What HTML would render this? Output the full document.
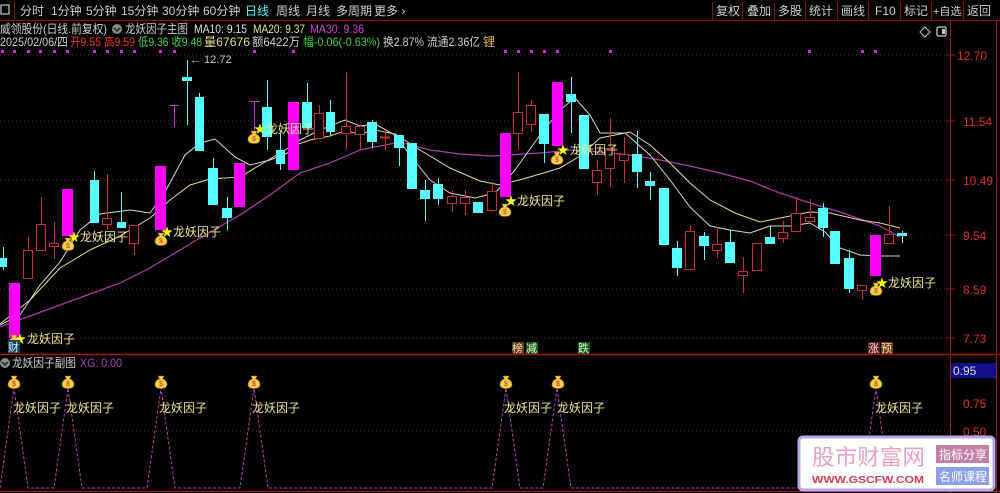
<!DOCTYPE html>
<html><head><meta charset="utf-8"><style>
body{margin:0;background:#000;width:1000px;height:493px;overflow:hidden;font-family:"Liberation Sans","Noto Sans CJK SC",sans-serif;}
svg{position:absolute;left:0;top:0}
text{font-family:"Liberation Sans","Noto Sans CJK SC",sans-serif}
</style></head><body>
<svg width="1000" height="493" viewBox="0 0 1000 493">
<rect x="0" y="0" width="1000" height="20" fill="#000"/>
<line x1="0" y1="20.5" x2="1000" y2="20.5" stroke="#8a1010"/>
<rect x="1" y="5" width="8" height="9" fill="none" stroke="#ccc" stroke-width="1.2"/>
<line x1="14.5" y1="2" x2="14.5" y2="19" stroke="#8a1010"/>
<g font-size="12" fill="#d0d0d0">
<text x="20" y="15">分时</text><text x="51" y="15">1分钟</text><text x="86" y="15">5分钟</text><text x="121" y="15">15分钟</text><text x="162" y="15">30分钟</text><text x="203" y="15">60分钟</text>
<text x="245" y="15" fill="#5ff">日线</text><text x="276" y="15">周线</text><text x="306" y="15">月线</text><text x="336" y="15">多周期</text><text x="374" y="15">更多 ›</text>
<text x="716" y="15">复权</text><text x="747" y="15">叠加</text><text x="778" y="15">多股</text><text x="809" y="15">统计</text><text x="841" y="15">画线</text><text x="875" y="15">F10</text><text x="904" y="15">标记</text><text x="933" y="15" font-size="11">+自选</text><text x="967" y="15">返回</text>
</g>
<g stroke="#8a1010"><line x1="712.5" y1="2" x2="712.5" y2="20"/><line x1="742.5" y1="2" x2="742.5" y2="20"/><line x1="774.5" y1="2" x2="774.5" y2="20"/><line x1="805.5" y1="2" x2="805.5" y2="20"/><line x1="837.5" y1="2" x2="837.5" y2="20"/><line x1="868.5" y1="2" x2="868.5" y2="20"/><line x1="900.5" y1="2" x2="900.5" y2="20"/><line x1="931.5" y1="2" x2="931.5" y2="20"/><line x1="963.5" y1="2" x2="963.5" y2="20"/></g>
<g font-size="12" lengthAdjust="spacingAndGlyphs">
<text x="0" y="33" fill="#d0d0d0" textLength="107" lengthAdjust="spacingAndGlyphs">威领股份(日线.前复权)</text>
<circle cx="117" cy="29" r="5" fill="#888"/><path d="M114 28l3 3 3-3" stroke="#222" fill="none" stroke-width="1.4"/>
<text x="125" y="33" fill="#d0d0d0" textLength="63" lengthAdjust="spacingAndGlyphs">龙妖因子主图</text>
<text x="194" y="33" fill="#e0e0e0" textLength="53" lengthAdjust="spacingAndGlyphs">MA10: 9.15</text>
<text x="253" y="33" fill="#e6e08a" textLength="52" lengthAdjust="spacingAndGlyphs">MA20: 9.37</text>
<text x="310" y="33" fill="#d040d0" textLength="54" lengthAdjust="spacingAndGlyphs">MA30: 9.36</text>
<text x="0" y="46" fill="#d0d0d0" textLength="68" lengthAdjust="spacingAndGlyphs">2025/02/06/四</text>
<text x="70" y="46" fill="#f03030" textLength="65" lengthAdjust="spacingAndGlyphs">开9.55 高9.59</text>
<text x="138" y="46" fill="#40d040" textLength="64" lengthAdjust="spacingAndGlyphs">低9.36 收9.48</text>
<text x="204" y="46" fill="#e6e08a" textLength="46" lengthAdjust="spacingAndGlyphs">量67676</text>
<text x="252" y="46" fill="#d0d0d0" textLength="48" lengthAdjust="spacingAndGlyphs">额6422万</text>
<text x="303" y="46" fill="#40d040" textLength="77" lengthAdjust="spacingAndGlyphs">幅-0.06(-0.63%)</text>
<text x="383" y="46" fill="#d0d0d0" textLength="97" lengthAdjust="spacingAndGlyphs">换2.87% 流通2.36亿</text><text x="483" y="46" fill="#e6c040">锂</text>
</g>
<path d="M925 27l5 5-5 5-5-5z" fill="none" stroke="#ccc"/>
<rect x="937" y="27" width="9" height="9" rx="1.5" fill="none" stroke="#ccc" stroke-width="1.3"/><rect x="942" y="29" width="3" height="5" fill="#ccc"/>
<line x1="950.5" y1="20" x2="950.5" y2="493" stroke="#a01818"/>
<line x1="996.5" y1="20" x2="996.5" y2="493" stroke="#a01818"/>
<g stroke="#7a1a1a" stroke-dasharray="1 3"><line x1="0" y1="55" x2="950" y2="55"/><line x1="0" y1="121" x2="950" y2="121"/><line x1="0" y1="180" x2="950" y2="180"/><line x1="0" y1="235" x2="950" y2="235"/><line x1="0" y1="289" x2="950" y2="289"/><line x1="0" y1="338" x2="950" y2="338"/><line x1="0" y1="431" x2="950" y2="431"/></g>
<g font-size="12" fill="#e03030"><text x="957" y="60">12.70</text><text x="963" y="126">11.54</text><text x="963" y="185">10.49</text><text x="963" y="240">9.54</text><text x="963" y="294">8.59</text><text x="963" y="343">7.73</text><text x="963" y="408">0.75</text><text x="963" y="436">0.50</text></g>
<g stroke="#a01818"><line x1="946" y1="55" x2="955" y2="55"/><line x1="946" y1="121" x2="955" y2="121"/><line x1="946" y1="180" x2="955" y2="180"/><line x1="946" y1="235" x2="955" y2="235"/><line x1="946" y1="289" x2="955" y2="289"/><line x1="946" y1="338" x2="955" y2="338"/></g>
<g fill="#e020e0"><rect x="1" y="50" width="3" height="3"/><rect x="13" y="50" width="3" height="3"/><rect x="27" y="50" width="3" height="3"/><rect x="39" y="50" width="3" height="3"/><rect x="53" y="50" width="3" height="3"/><rect x="66" y="50" width="3" height="3"/><rect x="93" y="50" width="3" height="3"/><rect x="106" y="50" width="3" height="3"/><rect x="120" y="50" width="3" height="3"/><rect x="133" y="50" width="3" height="3"/><rect x="159" y="50" width="3" height="3"/><rect x="173" y="50" width="3" height="3"/><rect x="253" y="50" width="3" height="3"/><rect x="292" y="50" width="3" height="3"/><rect x="504" y="50" width="3" height="3"/><rect x="517" y="50" width="3" height="3"/><rect x="530" y="50" width="3" height="3"/><rect x="543" y="50" width="3" height="3"/><rect x="556" y="50" width="3" height="3"/><rect x="609" y="50" width="3" height="3"/><rect x="808" y="50" width="3" height="3"/><rect x="861" y="50" width="3" height="3"/><rect x="874" y="50" width="3" height="3"/></g>
<polyline fill="none" stroke="#b03cb0" stroke-width="1.2" points="0,327 30,316 60,305 90,294 120,283 150,268 180,250 210,232 240,215 270,195 300,173 330,163 360,150 380,146 400,142 430,150 460,154 490,156 510,155 540,153 570,150 600,152 630,155 660,160 690,166 720,173 750,181 780,193 810,203 840,212 860,219 880,226 900,237"/>
<polyline fill="none" stroke="#e6e08a" stroke-width="1" points="0,324 30,300 60,268 90,250 120,236 150,218 170,200 190,185 210,179 240,177 260,165 290,147 310,140 330,136 345,131 360,134 375,130 395,134 420,150 450,168 480,181 500,185 530,177 560,168 580,156 600,138 630,132 650,145 670,163 690,183 710,200 735,213 760,222 790,216 810,212 830,213 860,220 880,223 900,228"/>
<polyline fill="none" stroke="#d8d8d8" stroke-width="1" points="0,325 20,315 40,285 60,262 80,230 100,214 130,210 150,213 165,192 185,155 200,143 215,139 235,157 250,165 270,160 290,152 300,140 320,130 345,120 360,126 375,124 395,135 410,155 430,180 450,193 475,198 495,193 515,170 540,135 560,110 575,98 590,115 600,133 625,133 650,155 670,180 690,207 710,226 730,230 750,233 770,226 790,226 810,223 825,232 840,248 860,255 880,256 900,256"/>
<g stroke-width="1">
<g stroke="#c83232">
<line x1="28.5" y1="237" x2="28.5" y2="279"/><line x1="41.5" y1="197" x2="41.5" y2="251"/><line x1="54.5" y1="222" x2="54.5" y2="259"/><line x1="107.5" y1="174" x2="107.5" y2="230"/><line x1="134.5" y1="225" x2="134.5" y2="255"/>
<line x1="319.5" y1="105" x2="319.5" y2="138"/><line x1="346.5" y1="72" x2="346.5" y2="150"/><line x1="360.5" y1="126" x2="360.5" y2="150"/><line x1="385.5" y1="130" x2="385.5" y2="150"/><line x1="452.5" y1="190" x2="452.5" y2="212"/><line x1="465.5" y1="190" x2="465.5" y2="215"/><line x1="492.5" y1="182" x2="492.5" y2="212"/><line x1="518.5" y1="72" x2="518.5" y2="150"/><line x1="531.5" y1="100" x2="531.5" y2="132"/><line x1="597.5" y1="160" x2="597.5" y2="195"/><line x1="610.5" y1="118" x2="610.5" y2="187"/><line x1="624.5" y1="137" x2="624.5" y2="183"/>
<line x1="690.5" y1="225" x2="690.5" y2="269"/><line x1="717.5" y1="227" x2="717.5" y2="258"/><line x1="743.5" y1="257" x2="743.5" y2="293"/><line x1="757.5" y1="243" x2="757.5" y2="270"/><line x1="783.5" y1="221" x2="783.5" y2="243"/><line x1="796.5" y1="197" x2="796.5" y2="231"/><line x1="810.5" y1="199" x2="810.5" y2="221"/><line x1="862.5" y1="285" x2="862.5" y2="300"/><line x1="889.5" y1="206" x2="889.5" y2="243"/>
</g>
<g stroke="#d030d0"><line x1="174.5" y1="105" x2="174.5" y2="127"/><line x1="170" y1="105.5" x2="179" y2="105.5"/><line x1="254.5" y1="101" x2="254.5" y2="130"/><line x1="249" y1="101.5" x2="260" y2="101.5"/></g>
<g stroke="#5ff">
<line x1="3.5" y1="247" x2="3.5" y2="270"/><line x1="94.5" y1="171" x2="94.5" y2="223"/><line x1="121.5" y1="192" x2="121.5" y2="228"/><line x1="187.5" y1="60" x2="187.5" y2="125"/><line x1="199.5" y1="93" x2="199.5" y2="151"/><line x1="213.5" y1="158" x2="213.5" y2="205"/><line x1="227.5" y1="197" x2="227.5" y2="230"/><line x1="267.5" y1="80" x2="267.5" y2="150"/><line x1="280.5" y1="133" x2="280.5" y2="170"/><line x1="307.5" y1="83" x2="307.5" y2="128"/><line x1="330.5" y1="100" x2="330.5" y2="135"/><line x1="372.5" y1="120" x2="372.5" y2="148"/><line x1="399.5" y1="135" x2="399.5" y2="166"/><line x1="425.5" y1="180" x2="425.5" y2="221"/><line x1="438.5" y1="178" x2="438.5" y2="205"/><line x1="544.5" y1="114" x2="544.5" y2="163"/><line x1="571.5" y1="77" x2="571.5" y2="133"/><line x1="637.5" y1="131" x2="637.5" y2="188"/><line x1="650.5" y1="172" x2="650.5" y2="200"/><line x1="677.5" y1="241" x2="677.5" y2="276"/><line x1="704.5" y1="232" x2="704.5" y2="260"/><line x1="730.5" y1="230" x2="730.5" y2="263"/><line x1="770.5" y1="226" x2="770.5" y2="244"/><line x1="823.5" y1="203" x2="823.5" y2="237"/><line x1="849.5" y1="250" x2="849.5" y2="293"/><line x1="902.5" y1="231" x2="902.5" y2="243"/>
</g></g>
<g fill="#5ff">
<rect x="0" y="258" width="7" height="9"/><rect x="90" y="180" width="9" height="43"/><rect x="117" y="222" width="9" height="6"/><rect x="182" y="77" width="10" height="4"/><rect x="195" y="97" width="9" height="54"/><rect x="208" y="168" width="10" height="37"/><rect x="222" y="208" width="10" height="10"/><rect x="262" y="107" width="10" height="30"/><rect x="276" y="150" width="9" height="14"/><rect x="302" y="102" width="10" height="26"/><rect x="326" y="112" width="9" height="20"/><rect x="367" y="122" width="10" height="20"/><rect x="394" y="135" width="10" height="13"/><rect x="407" y="143" width="10" height="46"/><rect x="420" y="190" width="10" height="9"/><rect x="433" y="184" width="10" height="15"/><rect x="473" y="202" width="10" height="11"/><rect x="539" y="114" width="10" height="30"/><rect x="566" y="94" width="10" height="8"/><rect x="579" y="115" width="10" height="54"/><rect x="632" y="154" width="10" height="18"/><rect x="645" y="181" width="10" height="5"/><rect x="659" y="188" width="10" height="57"/><rect x="672" y="248" width="10" height="20"/><rect x="699" y="236" width="10" height="10"/><rect x="725" y="242" width="10" height="21"/><rect x="765" y="237" width="10" height="7"/><rect x="818" y="208" width="10" height="20"/><rect x="830" y="231" width="10" height="33"/><rect x="844" y="258" width="10" height="31"/><rect x="897" y="233" width="10" height="3"/>
</g>
<g fill="#ff00ff"><rect x="9" y="283" width="11" height="55"/><rect x="62" y="189" width="11" height="47"/><rect x="155" y="166" width="11" height="64"/><rect x="234" y="163" width="11" height="44"/><rect x="288" y="102" width="11" height="68"/><rect x="500" y="133" width="11" height="64"/><rect x="552" y="82" width="11" height="64"/><rect x="870" y="235" width="11" height="41"/></g>
<g fill="#000" stroke="#c83232"><rect x="23.5" y="250.5" width="9" height="28"/><rect x="36.5" y="224.5" width="9" height="26"/><rect x="49.5" y="243.5" width="9" height="3"/><rect x="102.5" y="218.5" width="9" height="6"/><rect x="129.5" y="225.5" width="9" height="18"/><rect x="314.5" y="113.5" width="9" height="25"/><rect x="341.5" y="126.5" width="9" height="7"/><rect x="355.5" y="126.5" width="9" height="8"/><rect x="380.5" y="137" width="9" height="1"/><rect x="447.5" y="196.5" width="9" height="7"/><rect x="460.5" y="197.5" width="9" height="6"/><rect x="487.5" y="191.5" width="9" height="19"/><rect x="513.5" y="112.5" width="9" height="21"/><rect x="526.5" y="105.5" width="9" height="19"/><rect x="592.5" y="170.5" width="9" height="12"/><rect x="605.5" y="148.5" width="9" height="20"/><rect x="619.5" y="154.5" width="9" height="6"/><rect x="685.5" y="231.5" width="9" height="38"/><rect x="712.5" y="244.5" width="9" height="6"/><rect x="738.5" y="271.5" width="9" height="4"/><rect x="752.5" y="243.5" width="9" height="27"/><rect x="778.5" y="232.5" width="9" height="6"/><rect x="791.5" y="213.5" width="9" height="18"/><rect x="805.5" y="217.5" width="9" height="4"/><rect x="857.5" y="285.5" width="9" height="5"/><rect x="884.5" y="234.5" width="9" height="9"/></g>
<text x="190" y="63" font-size="11" fill="#ccc">← 12.72</text>
<defs><g id="bag"><path d="M-3,-7 L3,-7 L1.5,-4 C6,-3 7,2 5,4 C3,6 -3,6 -5,4 C-7,2 -6,-3 -1.5,-4Z" fill="#f5d040" stroke="#a07010" stroke-width=".6"/><text x="0" y="3" font-size="7" fill="#b03070" text-anchor="middle">$</text></g></defs>
<g font-size="12" fill="#f0e890">
<use href="#bag" x="14" y="342"/><text x="14" y="343" fill="#ff0">★</text><text x="27" y="343">龙妖因子</text>
<use href="#bag" x="68" y="245"/><text x="68" y="241" fill="#ff0">★</text><text x="80" y="241">龙妖因子</text>
<use href="#bag" x="161" y="240"/><text x="161" y="236" fill="#ff0">★</text><text x="173" y="236">龙妖因子</text>
<use href="#bag" x="254" y="138"/><text x="254" y="133" fill="#ff0">★</text><text x="266" y="133">龙妖因子</text>
<use href="#bag" x="505" y="211"/><text x="505" y="205" fill="#ff0">★</text><text x="517" y="205">龙妖因子</text>
<use href="#bag" x="557" y="159"/><text x="557" y="154" fill="#ff0">★</text><text x="570" y="154">龙妖因子</text>
<use href="#bag" x="876" y="290"/><text x="876" y="287" fill="#ff0">★</text><text x="888" y="287">龙妖因子</text>
</g>
<rect x="8" y="340" width="12" height="13" fill="#204060"/><text x="8" y="351" font-size="11" fill="#cfe">财</text>
<rect x="512" y="342" width="12" height="12" fill="#5a3a10"/><text x="512" y="352" font-size="11" fill="#fdb">榜</text>
<rect x="526" y="342" width="12" height="12" fill="#1a5a1a"/><text x="526" y="352" font-size="11" fill="#dfd">减</text>
<rect x="578" y="342" width="12" height="12" fill="#1a5a1a"/><text x="578" y="352" font-size="11" fill="#dfd">跌</text>
<rect x="868" y="342" width="12" height="12" fill="#5a1a1a"/><text x="868" y="352" font-size="11" fill="#fdd">涨</text>
<rect x="881" y="342" width="12" height="12" fill="#6a3a10"/><text x="881" y="352" font-size="11" fill="#fdb">预</text>
<line x1="0" y1="354.5" x2="1000" y2="354.5" stroke="#a01818" stroke-width="1.5"/>
<circle cx="5" cy="363" r="5" fill="#888"/><path d="M2 362l3 3 3-3" stroke="#222" fill="none" stroke-width="1.4"/>
<text x="12" y="367" font-size="12" fill="#d0d0d0" textLength="64" lengthAdjust="spacingAndGlyphs">龙妖因子副图</text><text x="80" y="367" font-size="12" fill="#b040c0" textLength="42" lengthAdjust="spacingAndGlyphs">XG: 0.00</text>
<rect x="951" y="363" width="45" height="15" fill="#101088"/><text x="953" y="375" font-size="12" fill="#ddd">0.95</text>
<g fill="none" stroke="#c040c0" stroke-dasharray="3 2"><polyline points="0,488 14,388 28,488 54,488 68,388 82,488 147,488 161,388 175,488 240,488 254,388 268,488 492,488 506,388 520,488 543,488 557,388 571,488 862,488 876,388 890,488 950,488"/></g>
<g font-size="12" fill="#f0e890">
<use href="#bag" x="14" y="383"/><text x="13" y="412">龙妖因子</text>
<use href="#bag" x="68" y="383"/><text x="66" y="412">龙妖因子</text>
<use href="#bag" x="161" y="383"/><text x="159" y="412">龙妖因子</text>
<use href="#bag" x="254" y="383"/><text x="252" y="412">龙妖因子</text>
<use href="#bag" x="506" y="383"/><text x="504" y="412">龙妖因子</text>
<use href="#bag" x="558" y="383"/><text x="557" y="412">龙妖因子</text>
<use href="#bag" x="876" y="383"/><text x="875" y="412">龙妖因子</text>
</g>
<line x1="0" y1="491.5" x2="1000" y2="491.5" stroke="#a01818"/>
<rect x="799" y="437" width="195" height="53" rx="4" fill="#fff" stroke="#b8a8e8" stroke-width="3"/>
<text x="812" y="465" font-size="22" fill="#e8a0c0" textLength="113" lengthAdjust="spacingAndGlyphs" font-family="Liberation Serif,Noto Serif CJK SC,serif">股市财富网</text>
<text x="812" y="483" font-size="10" fill="#d04050" font-family="Liberation Serif,serif" font-weight="bold" textLength="112" lengthAdjust="spacingAndGlyphs">WWW.GSCFW.COM</text>
<rect x="936" y="445" width="53" height="18" fill="#c080a8"/><text x="939" y="459" font-size="12" fill="#fff">指标分享</text>
<rect x="936" y="467" width="53" height="18" fill="#8aa0e8"/><text x="939" y="481" font-size="12" fill="#fff">名师课程</text>
</svg>
</body></html>
